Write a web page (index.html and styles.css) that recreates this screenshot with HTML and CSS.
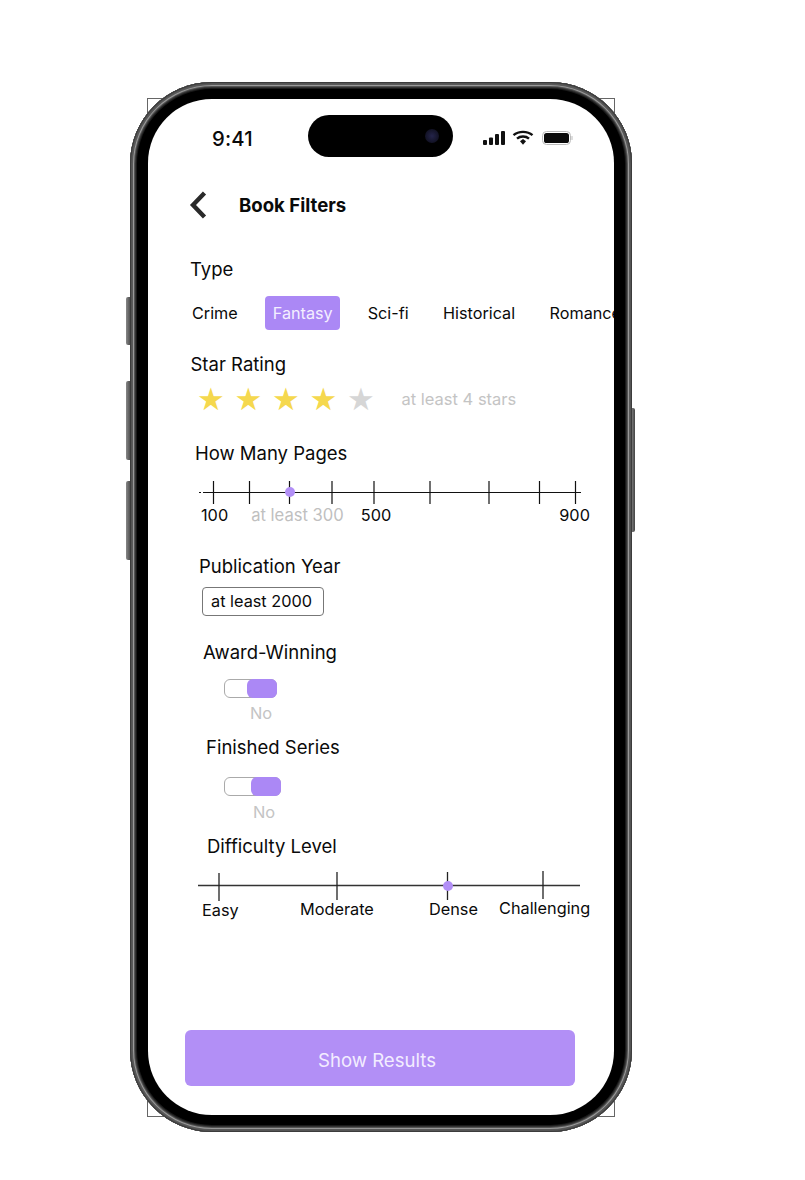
FILE: index.html
```html
<!DOCTYPE html>
<html lang="en">
<head>
    <meta charset="UTF-8">
    <meta name="viewport" content="width=device-width, initial-scale=1.0">
    <title>Book Filters</title>
    <link rel="stylesheet" href="styles.css">
</head>
<body>
    <div class="stage">
        <div class="guide-box"></div>
        <div class="side-btn side-btn-mute"></div>
        <div class="side-btn side-btn-up"></div>
        <div class="side-btn side-btn-down"></div>
        <div class="side-btn side-btn-power"></div>

        <div class="phone">
            <div class="screen">
                <div class="island"><span class="lens"></span></div>

                <div class="status-bar">
                    <span class="time">9:41</span>
                    <svg class="status-icons" width="90" height="16" viewBox="0 0 90 16">
                        <!-- signal -->
                        <rect x="0" y="10" width="4" height="5" rx="1" fill="#111"/>
                        <rect x="6" y="7.5" width="4" height="7.5" rx="1" fill="#111"/>
                        <rect x="12" y="4" width="4" height="11" rx="1" fill="#111"/>
                        <rect x="18" y="1" width="4" height="14" rx="1" fill="#111"/>
                        <!-- wifi -->
                        <path d="M30.5 5.2C35.5 .8 44.500 .8 49.500 5.2" fill="none" stroke="#111" stroke-width="2.4"/>
                        <path d="M34 8.6C37.300 5.8 42.700 5.8 46 8.6" fill="none" stroke="#111" stroke-width="2.4"/>
                        <path d="M37 11.3L40 8.9L43 11.3L40 14.8Z" fill="#111"/>
                        <!-- battery -->
                        <rect x="59.5" y="1.5" width="28" height="13" rx="4" fill="none" stroke="#bbb" stroke-width="1"/>
                        <rect x="61" y="3" width="25" height="10" rx="2.6" fill="#0a0a0a"/>
                        <rect x="88.500" y="6" width="1" height="4" rx="0.5" fill="#bbb"/>
                    </svg>
                </div>

                <div class="header">
                    <svg class="back" width="18" height="28" viewBox="0 0 18 28">
                        <path d="M15.500 2L4 14L15.500 26" fill="none" stroke="#2a2a2a" stroke-width="4.400"/>
                    </svg>
                    <h1>Book Filters</h1>
                </div>

                <div class="label label-type">Type</div>
                <div class="chips">
                    <span class="chip">Crime</span>
                    <span class="chip chip-active">Fantasy</span>
                    <span class="chip">Sci-fi</span>
                    <span class="chip">Historical</span>
                    <span class="chip">Romance</span>
                </div>

                <div class="label label-stars">Star Rating</div>
                <div class="stars">
                    <span class="star">★</span>
                    <span class="star">★</span>
                    <span class="star">★</span>
                    <span class="star">★</span>
                    <span class="star star-off">★</span>
                    <span class="stars-note">at least 4 stars</span>
                </div>

                <div class="label label-pages">How Many Pages</div>
                <svg class="track track-pages" width="384" height="26" viewBox="0 0 384 26">
                    <path d="M2 12.5H4M6 12.5H384" stroke="#111" stroke-width="1.200"/>
                    <path d="M16.5 1V24M52.5 1V24M92.5 1V24M135 1V24M177 1V24M233 1V24M292 1V24M342.500 1V24M378.500 1V24" stroke="#111" stroke-width="1.200"/>
                    <circle cx="93" cy="12" r="5" fill="#b28ff6"/>
                </svg>
                <div class="ticks-pages">
                    <span class="tick-a">100</span>
                    <span class="tick-note">at least 300</span>
                    <span class="tick-b">500</span>
                    <span class="tick-c">900</span>
                </div>

                <div class="label label-year">Publication Year</div>
                <div class="year-box">at least 2000</div>

                <div class="label label-award">Award-Winning</div>
                <div class="toggle toggle-award"><span class="knob"></span></div>
                <div class="toggle-text toggle-text-award">No</div>

                <div class="label label-series">Finished Series</div>
                <div class="toggle toggle-series"><span class="knob"></span></div>
                <div class="toggle-text toggle-text-series">No</div>

                <div class="label label-level">Difficulty Level</div>
                <svg class="track track-level" width="384" height="32" viewBox="0 0 384 32">
                    <path d="M0 14.500H382" stroke="#333" stroke-width="1.300"/>
                    <path d="M21 2V30M139 1V29M249.500 1V29M345 0V28" stroke="#222" stroke-width="1.300"/>
                    <circle cx="250" cy="15" r="5" fill="#b28ff6"/>
                </svg>
                <div class="ticks-level">
                    <span class="level-easy">Easy</span>
                    <span class="level-moderate">Moderate</span>
                    <span class="level-dense">Dense</span>
                    <span class="level-hard">Challenging</span>
                </div>

                <button class="show-btn">Show Results</button>
            </div>
        </div>
    </div>
</body>
</html>
```

FILE: styles.css
```css
body {
    margin: 0;
    background: #fff;
    font-family: Inter, "Liberation Sans", sans-serif;
    color: #0a0a0a;
}
.stage {
    position: relative;
    width: 805px;
    height: 1180px;
    overflow: hidden;
    padding-top: 82px;
    box-sizing: border-box;
}
.guide-box {
    position: absolute;
    left: 147px;
    top: 98px;
    width: 468px;
    height: 1019px;
    border: 1px solid #666;
    box-sizing: border-box;
}
.side-btn {
    position: absolute;
    left: 126px;
    width: 5px;
    background: linear-gradient(90deg, #888, #444);
    border-radius: 2px 0 0 2px;
}
.side-btn-mute { top: 297px; height: 48px; }
.side-btn-up { top: 381px; height: 79px; }
.side-btn-down { top: 481px; height: 79px; }
.side-btn-power {
    left: 631px;
    top: 408px;
    height: 124px;
    width: 4px;
    border-radius: 0 2px 2px 0;
}
.phone {
    position: relative;
    box-sizing: border-box;
    width: 502px;
    height: 1050px;
    margin-left: 130px;
    padding: 17px 18px;
    background: #000;
    border-radius: 82px;
    box-shadow: inset 0 0 0 1px #3c3c3c, inset 0 0 0 2px #555, inset 0 0 0 3px #5a5a5a, inset 0 0 0 4px #999, inset 0 0 0 5px #555, inset 0 0 0 6px #333, inset 0 0 0 7px #1a1a1a;
}
.screen {
    position: relative;
    box-sizing: border-box;
    height: 1016px;
    background: #fff;
    border-radius: 64px;
    overflow: hidden;
}
.island {
    position: absolute;
    left: 160px;
    top: 16px;
    width: 145px;
    height: 42px;
    border-radius: 21px;
    background: #000;
}
.lens {
    position: absolute;
    right: 14px;
    top: 14px;
    width: 14px;
    height: 14px;
    border-radius: 50%;
    background: radial-gradient(circle, #24244a, #0a0a14);
}
.status-bar {
    display: flex;
    justify-content: space-between;
    align-items: center;
    height: 20px;
    padding: 29px 40px 0 64px;
}
.time {
    font-size: 20.3px;
    font-weight: 500;
    letter-spacing: 0.2px;
}
.status-icons {
    margin: -1px 1px 0 0;
}
.header {
    display: flex;
    align-items: center;
    margin-top: 42px;
    padding-left: 41px;
    height: 30px;
}
.header h1 {
    margin: 0 0 0 32px;
    font-size: 18.6px;
    font-weight: 700;
}
.label {
    font-size: 18.5px;
    line-height: 22px;
}
.label-type { margin: 38px 0 0 42px; }
.chips {
    display: flex;
    align-items: center;
    margin: 16px 0 0 37px;
    font-size: 16.2px;
    white-space: nowrap;
}
.chip {
    flex-shrink: 0;
    padding: 0 7px;
    height: 34px;
    line-height: 34px;
    margin-right: 20.5px;
    border-radius: 4px;
}
.chip-active {
    padding: 0 7.5px;
    background: #ab88f5;
    color: #f4efff;
}
.label-stars { margin: 23px 0 0 42.500px; }
.stars {
    display: flex;
    align-items: center;
    margin: 9px 0 0 49px;
    height: 30px;
}
.star {
    width: 37.500px;
    font-family: "DejaVu Sans", sans-serif;
    font-size: 31px;
    line-height: 30px;
    color: #f5d84e;
}
.star-off { color: #d6d6d6; }
.stars-note {
    margin-left: 17px;
    font-size: 16.5px;
    color: #c4c4c4;
}
.label-pages { margin: 28px 0 0 47px; }
.track { display: block; }
.track-pages { margin: 16px 0 0 49px; }
.ticks-pages {
    display: flex;
    margin-top: -1px;
    height: 20px;
    line-height: 20px;
    font-size: 16.3px;
    white-space: nowrap;
}
.tick-a { margin-left: 53px; }
.tick-note { margin-left: 23px; font-size: 16.6px; color: #c0c0c0; }
.tick-b { margin-left: 17px; }
.tick-c { margin-left: 168px; }
.label-year { margin: 30px 0 0 51px; }
.year-box {
    box-sizing: border-box;
    width: 122px;
    height: 29px;
    line-height: 27px;
    margin: 10px 0 0 54px;
    padding-right: 3px;
    border: 1px solid #777;
    border-radius: 4px;
    text-align: center;
    font-size: 16.3px;
}
.label-award { margin: 25px 0 0 55px; }
.toggle {
    display: flex;
    justify-content: flex-end;
    box-sizing: border-box;
    height: 19px;
    margin-left: 76px;
    border: 1px solid #aaa;
    border-radius: 6px;
}
.toggle-award { width: 53px; margin-top: 16px; }
.toggle-series { width: 57px; margin-top: 19px; }
.knob {
    width: 30px;
    margin: -1px;
    background: #ab88f5;
    border-radius: 6px;
}
.toggle-text {
    font-size: 16.4px;
    line-height: 20px;
    margin-top: 5px;
    color: #c4c4c4;
}
.toggle-text-award { margin-left: 102px; }
.toggle-text-series { margin: 6px 0 0 105px; }
.label-series { margin: 13px 0 0 58px; }
.label-level { margin: 13px 0 0 59px; }
.track-level { margin: 14px 0 0 50px; }
.ticks-level {
    position: relative;
    height: 22px;
    margin-top: -4px;
    font-size: 16.3px;
    white-space: nowrap;
}
.ticks-level span {
    position: absolute;
    top: 0;
}
.ticks-level .level-easy { left: 54px; top: 1px; }
.level-moderate { left: 152px; }
.level-dense { left: 281px; }
.ticks-level .level-hard { left: 351px; top: -1px; }
.show-btn {
    display: block;
    position: absolute;
    left: 37px;
    top: 931px;
    width: 390px;
    height: 56px;
    border: none;
    border-radius: 6px;
    background: #b28ff6;
    color: #f3edff;
    font-family: inherit;
    font-size: 18.6px;
    padding: 3px 6px 0 0;
}
```
